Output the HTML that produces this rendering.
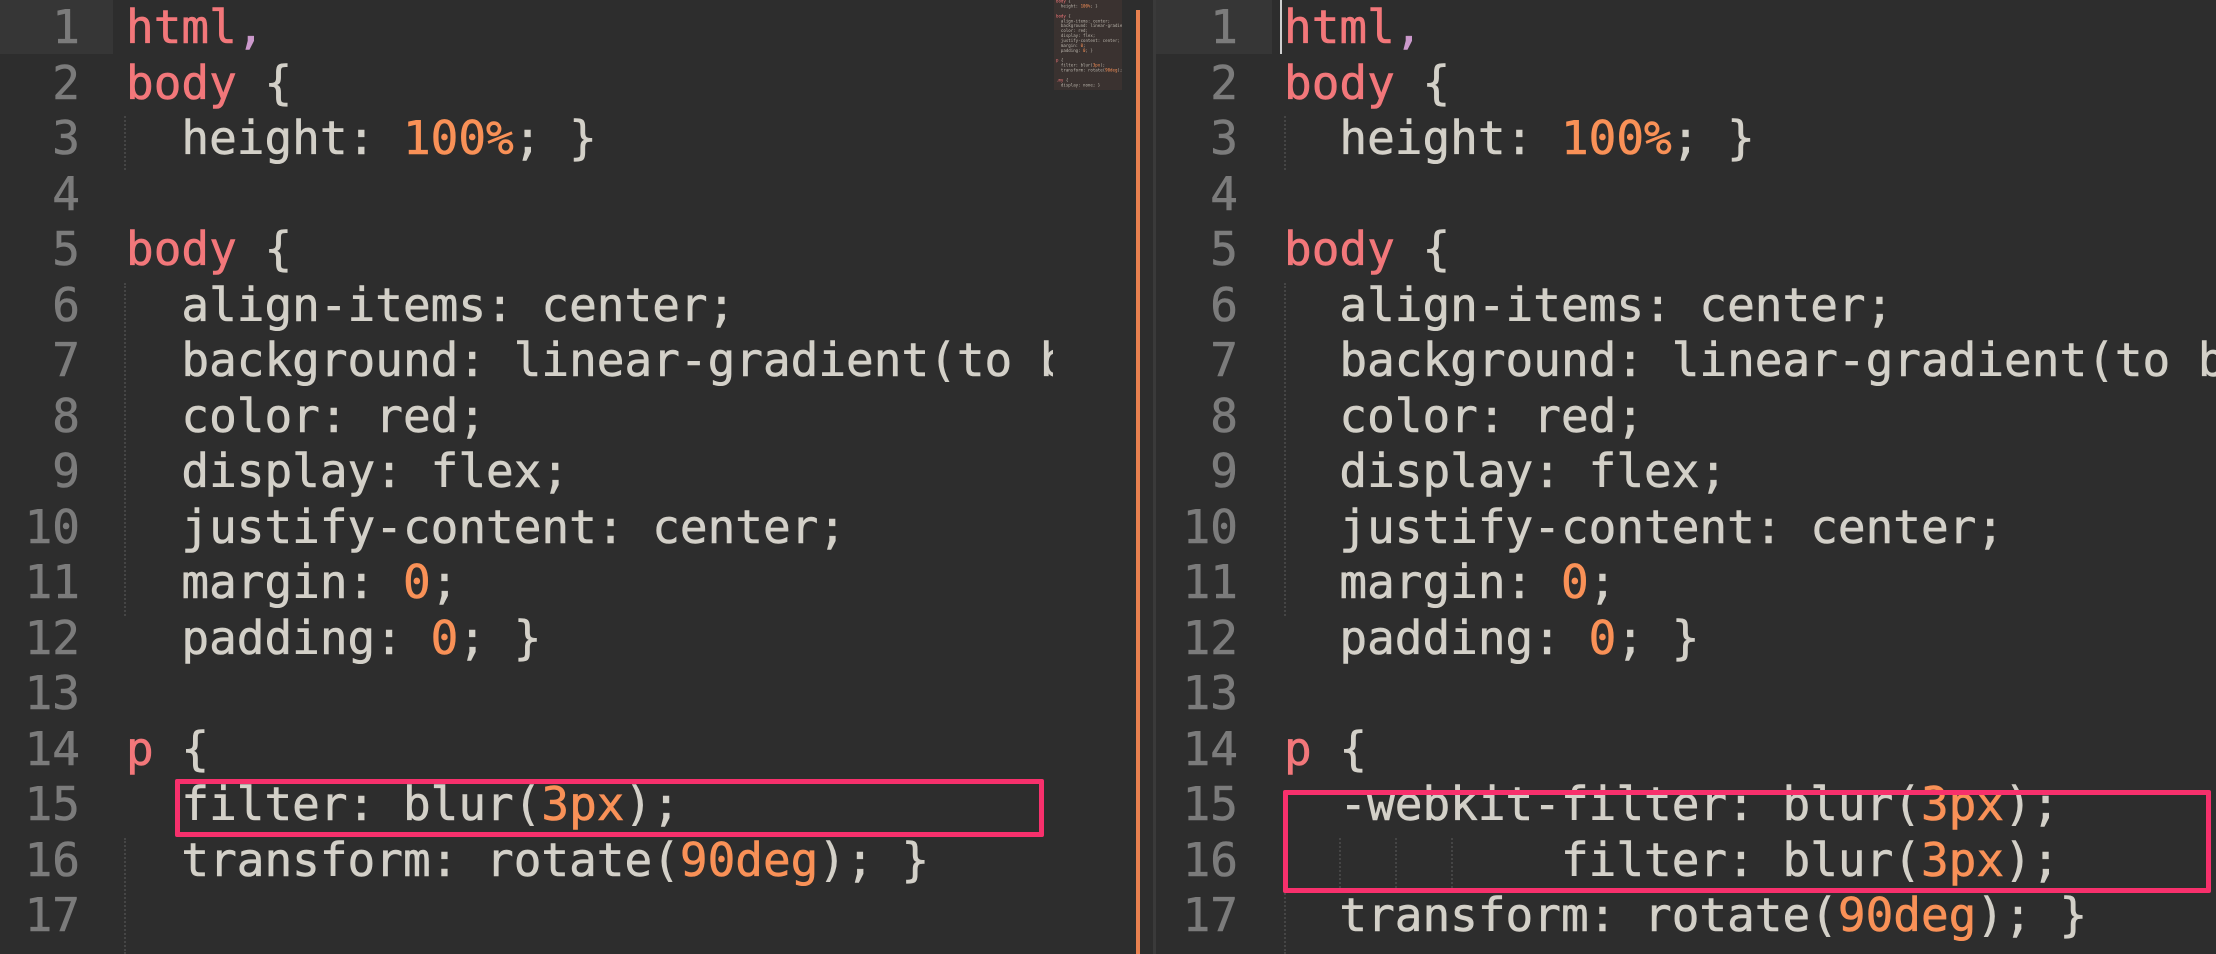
<!DOCTYPE html>
<html><head><meta charset="utf-8"><style>
html,body{margin:0;padding:0;background:#2d2d2d;width:2216px;height:954px;overflow:hidden;}
body{position:relative;font-family:"DejaVu Sans Mono","Liberation Mono",monospace;font-size:46px;}
.pane{position:absolute;top:0;height:954px;overflow:hidden;background:#2d2d2d;}
.ln{position:absolute;height:55.5px;line-height:55.5px;white-space:pre;-webkit-text-stroke:0.6px currentColor;}
.num{color:#7b7b7b;text-align:right;}
.code{color:#d3d0c8;}
.r{color:#f2777a}.o{color:#f99157}.p{color:#cc99cc}
.hl{position:absolute;top:0;height:54px;background:#363636;}
.guide{position:absolute;width:0;border-left:2px dotted #454545;}
.box{position:absolute;border:5px solid #f7306c;border-radius:2px;}
.mini{position:absolute;left:1054px;top:0;width:68px;height:90px;background:#3a3230;overflow:hidden;}
.mini div{transform:scale(0.12);transform-origin:0 0;font-size:34px;line-height:34px;color:#b9b4ab;white-space:pre;position:absolute;left:2px;top:-6px;}
</style></head><body>
<div class="pane" style="left:0;width:1053px;">
<div class="hl" style="left:0;width:113px;"></div>
<div class="guide" style="left:124px;top:116px;height:54px"></div>
<div class="guide" style="left:124px;top:283px;height:333px"></div>
<div class="guide" style="left:124px;top:838px;height:116px"></div>
<div id="L"></div>
<div class="box" style="left:175px;top:779px;width:859px;height:48px;"></div>
</div>
<div class="mini"><div style="line-height:41px">html,
<span class="r">body</span> {
  height: <span class="o">100%</span>; }

<span class="r">body</span> {
  align-items: center;
  background: linear-gradient(to b
  color: red;
  display: flex;
  justify-content: center;
  margin: <span class="o">0</span>;
  padding: <span class="o">0</span>; }

<span class="r">p</span> {
  filter: blur(<span class="o">3px</span>);
  transform: rotate(<span class="o">90deg</span>); }

<span class="r">.my</span> {
  display: none; }</div></div>
<div style="position:absolute;left:1136px;top:10px;width:4px;height:944px;background:#e7804f"></div>
<div style="position:absolute;left:1153px;top:0;width:3px;height:954px;background:#3a3a3a"></div>
<div class="pane" style="left:1156px;width:1060px;">
<div class="hl" style="left:0;width:116px;"></div>
<div style="position:absolute;left:124px;top:0;width:2px;height:54px;background:#cfcfcf"></div>
<div class="guide" style="left:128px;top:116px;height:54px"></div>
<div class="guide" style="left:128px;top:283px;height:333px"></div>
<div class="guide" style="left:128px;top:838px;height:116px"></div>
<div class="guide" style="left:183px;top:838px;height:54px"></div>
<div class="guide" style="left:239px;top:838px;height:54px"></div>
<div class="guide" style="left:295px;top:838px;height:54px"></div>
<div id="R"></div>
<div class="box" style="left:127px;top:790px;width:918px;height:93px;"></div>
</div>
<script>
function build(id,numRight,codeLeft,lines){
  var el=document.getElementById(id),h='';
  lines.forEach(function(t,i){
    var top=i*55.5;
    h+='<div class="ln num" style="top:'+top+'px;left:0;width:'+numRight+'px">'+(i+1)+'</div>';
    h+='<div class="ln code" style="top:'+top+'px;left:'+codeLeft+'px">'+t+'</div>';
  });
  el.innerHTML=h;
}
var common=['<span class="r">html</span><span class="p">,</span>','<span class="r">body</span> {','  height: <span class="o">100%</span>; }','','<span class="r">body</span> {','  align-items: center;','  background: linear-gradient(to bottom, #fff);','  color: red;','  display: flex;','  justify-content: center;','  margin: <span class="o">0</span>;','  padding: <span class="o">0</span>; }','','<span class="r">p</span> {'];
build('L',80,126,common.concat(['  filter: blur(<span class="o">3px</span>);','  transform: rotate(<span class="o">90deg</span>); }','']));
build('R',82,128,common.concat(['  -webkit-filter: blur(<span class="o">3px</span>);','          filter: blur(<span class="o">3px</span>);','  transform: rotate(<span class="o">90deg</span>); }']));
</script>
</body></html>
